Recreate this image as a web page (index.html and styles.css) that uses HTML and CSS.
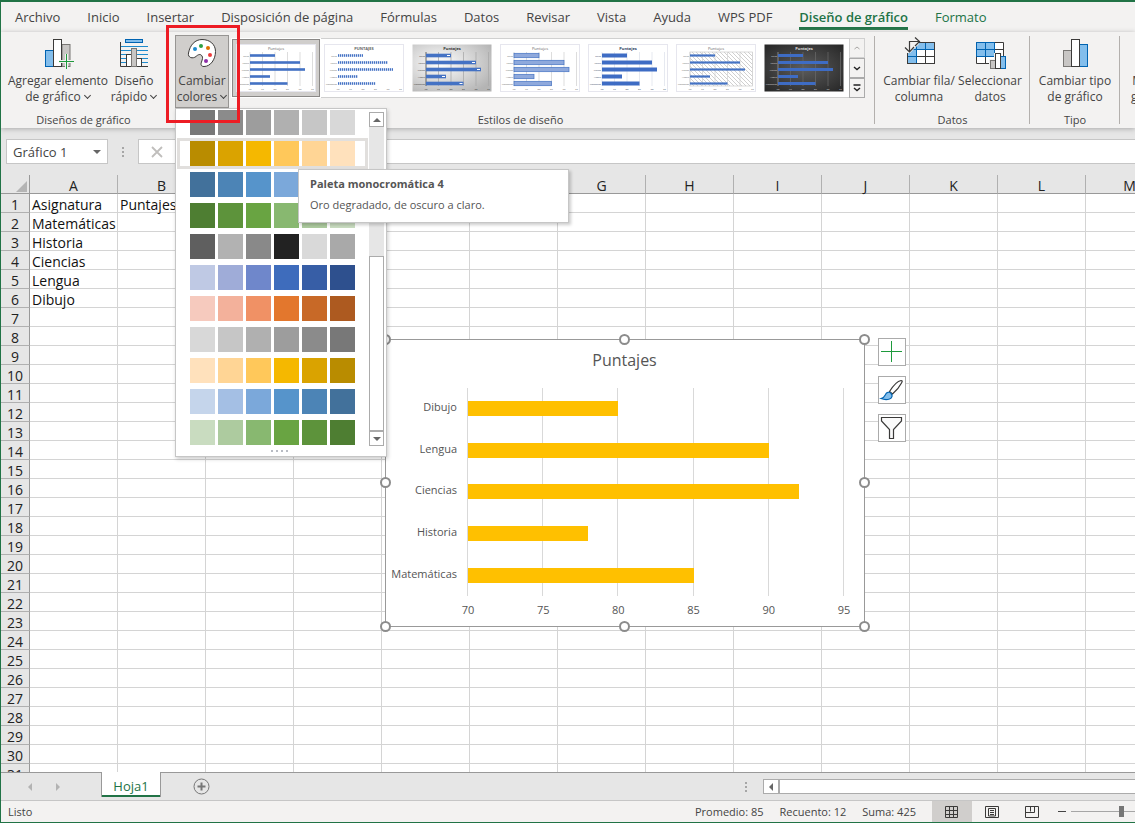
FILE: index.html
```html
<!DOCTYPE html>
<html lang="es">
<head>
<meta charset="utf-8">
<title>Gráfico 1</title>
<link rel="stylesheet" href="styles.css">
</head>
<body>
<div class="app">
  <nav class="tabs" aria-label="Cinta de opciones">
    <button class="tab">Archivo</button>
    <button class="tab">Inicio</button>
    <button class="tab">Insertar</button>
    <button class="tab">Disposición de página</button>
    <button class="tab">Fórmulas</button>
    <button class="tab">Datos</button>
    <button class="tab">Revisar</button>
    <button class="tab">Vista</button>
    <button class="tab">Ayuda</button>
    <button class="tab">WPS PDF</button>
    <button class="tab tab-active">Diseño de gráfico</button>
    <button class="tab tab-context">Formato</button>
  </nav>

  <div class="ribbon">
    <section class="group group-layouts">
      <div class="group-body">
        <button class="tool tool-add">
          <svg class="tool-icon" width="32" height="32" viewBox="0 0 32 32">
            <rect x="3.500" y="13.500" width="8" height="16" fill="#83beec" stroke="#0063b1"/>
            <rect x="20" y="7.500" width="8" height="22" fill="#c8c6c4" stroke="#797774"/>
            <rect x="11.500" y="2.500" width="8" height="27" fill="#fff" stroke="#3b3a39"/>
            <path d="M17 24.500H33M24.500 17V32" stroke="#f3f2f1" stroke-width="3"/>
            <path d="M17 24.500H32M24.500 17V32" stroke="#1e9a3c" stroke-width="1"/>
          </svg>
          <span>Agregar elemento<br>de gráfico <i class="chev"></i></span>
        </button>
        <button class="tool tool-quick">
          <svg class="tool-icon" width="32" height="32" viewBox="0 0 32 32">
            <rect x="7.500" y="2.500" width="17" height="3" fill="#83beec" stroke="#0063b1"/>
            <path d="M3 9.500H30M3 13.500H30M3 17.500H30M3 21.500H30M3 25.500H30" stroke="#1e8bcd"/>
            <path d="M2.500 5V29.500H30" fill="none" stroke="#3b3a39"/>
            <rect x="8.500" y="17.500" width="5" height="12" fill="#fff" stroke="#3b3a39"/>
            <rect x="18.500" y="21.500" width="5" height="8" fill="#fff" stroke="#3b3a39"/>
            <rect x="13.500" y="11.500" width="5" height="18" fill="#c8c6c4" stroke="#797774"/>
          </svg>
          <span>Diseño<br>rápido <i class="chev"></i></span>
        </button>
      </div>
      <h2 class="group-name">Diseños de gráfico</h2>
    </section>

    <section class="group group-styles">
      <div class="group-body">
        <div class="color-picker">
          <button class="tool tool-colors" aria-expanded="true">
            <svg class="tool-icon" width="32" height="32" viewBox="0 0 32 32">
              <path d="M2.500 16C4 8 9 2.500 16 2.500c8 0 13.500 5 13.500 12 0 8-5 15-11.500 15-3 0-3.500-2-2.500-4.500 1-3 1.500-4.500 .5-6-1.500-2.500-4-1.500-6 .5-3 2.500-8.500 1.500-7.500-3.500z" fill="#fff" stroke="#3b3a39"/>
              <circle cx="9" cy="12" r="2" fill="#1e8bcd"/><circle cx="15" cy="9" r="2" fill="#2ea043"/>
              <circle cx="22" cy="11" r="2" fill="#e07000"/><circle cx="24" cy="18" r="2" fill="#ed3b3b"/>
              <circle cx="20" cy="24" r="2" fill="#8e2fa8"/>
            </svg>
            <span>Cambiar<br>colores <i class="chev"></i></span>
          </button>
          <div class="menu">
            <div class="menu-main">
              <div class="palettes" id="palettes"></div>
              <div class="scroll">
                <button class="scroll-btn" aria-label="Subir"><i class="tri tri-up"></i></button>
                <div class="scroll-thumb"></div>
                <button class="scroll-btn" aria-label="Bajar"><i class="tri tri-down"></i></button>
              </div>
            </div>
            <div class="grip"><i></i><i></i><i></i><i></i></div>
            <div class="tooltip" role="tooltip">
              <strong>Paleta monocromática 4</strong>
              <span>Oro degradado, de oscuro a claro.</span>
            </div>
          </div>
          <div class="marker"></div>
        </div>
        <div class="gallery">
          <div class="thumbs" id="thumbs"></div>
          <div class="gallery-nav">
            <button aria-label="Fila anterior" disabled><svg width="8" height="8" viewBox="0 0 8 8"><path d="M1.500 5L4 3l2.500 2" fill="none" stroke="#a8a6a4"/></svg></button>
            <button aria-label="Fila siguiente"><svg width="8" height="8" viewBox="0 0 8 8"><path d="M1 3l3 2.500L7 3" fill="none" stroke="#222" stroke-width="1.400"/></svg></button>
            <button aria-label="Más estilos"><svg width="8" height="8" viewBox="0 0 8 8"><path d="M.5 1h7M1 4l3 2.500L7 4" fill="none" stroke="#222" stroke-width="1.400"/></svg></button>
          </div>
        </div>
      </div>
      <h2 class="group-name">Estilos de diseño</h2>
    </section>

    <section class="group group-data">
      <div class="group-body">
        <button class="tool tool-swap">
          <svg class="tool-icon" width="32" height="32" viewBox="0 0 32 32">
            <rect x="4.500" y="5.500" width="27" height="21" fill="#fff"/>
            <path d="M4.500 5.500h27v7h-18v14h-9z" fill="#83beec"/>
            <path d="M13.500 5.500v21M22.500 5.500v21M4.500 12.500h27M4.500 19.500h27" stroke="#3b3a39"/>
            <path d="M13.500 26V5.500M22.500 12V5.500M5 12.500h26M5 19.500h8" stroke="#0063b1"/>
            <rect x="4.500" y="5.500" width="27" height="21" fill="none" stroke="#3b3a39"/>
            <path d="M1 0h15v7l-9 9H1z" fill="#f3f2f1"/>
            <path d="M6.500 14V4.500H16M12 .5l4.500 4L12 9M2 10.500l4.500 4.500 4.500-5" fill="none" stroke="#3b3a39" stroke-width="1.200"/>
          </svg>
          <span>Cambiar fila/<br>columna</span>
        </button>
        <button class="tool tool-select">
          <svg class="tool-icon" width="32" height="32" viewBox="0 0 32 32">
            <rect x="2.500" y="5.500" width="27" height="21" fill="#fff"/>
            <path d="M2.500 5.500h18v14h-18z" fill="#83beec"/>
            <path d="M11.500 5.500v21M20.500 5.500v21M2.500 12.500h27M2.500 19.500h27M2.500 5.500h27v21h-27z" fill="none" stroke="#3b3a39"/>
            <path d="M11.500 5.500v14M2.500 12.500h18M2.500 5.500h18v14h-18z" fill="none" stroke="#0063b1"/>
            <path d="M15 22h5v-6h8v3h5v14H15z" fill="#f3f2f1"/>
            <rect x="16.500" y="23.500" width="5" height="8" fill="#c8c6c4" stroke="#797774"/>
            <rect x="26.500" y="19.500" width="5" height="12" fill="#83beec" stroke="#0063b1"/>
            <rect x="21.500" y="16.500" width="5" height="15" fill="#fff" stroke="#3b3a39"/>
          </svg>
          <span>Seleccionar<br>datos</span>
        </button>
      </div>
      <h2 class="group-name">Datos</h2>
    </section>

    <section class="group group-type">
      <div class="group-body">
        <button class="tool tool-type">
          <svg class="tool-icon" width="32" height="32" viewBox="0 0 32 32">
            <rect x="4.500" y="13.500" width="8" height="16" fill="#c8c6c4" stroke="#797774"/>
            <rect x="20.500" y="7.500" width="8" height="22" fill="#83beec" stroke="#0063b1"/>
            <rect x="12.500" y="2.500" width="8" height="27" fill="#fff" stroke="#3b3a39"/>
          </svg>
          <span>Cambiar tipo<br>de gráfico</span>
        </button>
      </div>
      <h2 class="group-name">Tipo</h2>
    </section>

    <section class="group group-place">
      <div class="group-body">
        <button class="tool tool-move"><span class="tool-icon"></span><span>Mover<br>gráfico</span></button>
      </div>
      <h2 class="group-name">Ubicación</h2>
    </section>
  </div>

  <div class="formula">
    <button class="name-box"><span>Gráfico 1</span><i class="tri tri-down"></i></button>
    <div class="dots"><i></i><i></i><i></i></div>
    <div class="formula-box">
      <svg width="12" height="12" viewBox="0 0 12 12"><path d="M1 1l10 10M11 1L1 11" stroke="#c0bebc" stroke-width="1.800"/></svg>
      <input class="formula-input" aria-label="Barra de fórmulas">
    </div>
  </div>

  <main class="sheet">
    <table class="grid">
      <thead><tr id="cols"><th class="corner"><i></i></th></tr></thead>
      <tbody id="rows"></tbody>
    </table>

    <figure class="chart">
      <figcaption class="chart-title">Puntajes</figcaption>
      <div class="chart-body">
        <div class="cats"><span>Dibujo</span><span>Lengua</span><span>Ciencias</span><span>Historia</span><span>Matemáticas</span></div>
        <div class="plot">
          <div class="lines"><i></i><i></i><i></i><i></i><i></i></div>
          <div class="bars">
            <div><b style="width:40%"></b></div>
            <div><b style="width:80%"></b></div>
            <div><b style="width:88%"></b></div>
            <div><b style="width:32%"></b></div>
            <div><b style="width:60%"></b></div>
          </div>
        </div>
      </div>
      <div class="axis"><span>70</span><span>75</span><span>80</span><span>85</span><span>90</span><span>95</span></div>
      <i class="handle h-nw"></i><i class="handle h-n"></i><i class="handle h-ne"></i>
      <i class="handle h-w"></i><i class="handle h-e"></i>
      <i class="handle h-sw"></i><i class="handle h-s"></i><i class="handle h-se"></i>
      <div class="chart-tools">
        <button aria-label="Elementos de gráfico"><svg width="26" height="26" viewBox="0 0 26 26"><path d="M2 12.500h21M12.500 2v21" stroke="#1e9a3c"/></svg></button>
        <button aria-label="Estilos de gráfico"><svg width="26" height="26" viewBox="0 0 26 26"><path d="M10.500 14.500C14 9 19 4 22 3.500c1.500 0 1.500 1 .5 2.500-2 4-5.500 8-9 11z" fill="#fff" stroke="#3b3a39" stroke-width="1.200"/><path d="M2 21.500c3-.5 3.500-2 4.500-4 1-2.500 4-3 5.500-1 2 2 1 4.500-1.500 5.500-3 1-6 .5-8.500-.5z" fill="#83beec" stroke="#0063b1" stroke-width="1.200"/></svg></button>
        <button aria-label="Filtros de gráfico"><svg width="26" height="26" viewBox="0 0 26 26"><path d="M2.500 2.500h20v3.500l-8 8.500v9h-4v-9l-8-8.500z" fill="#fafafa" stroke="#3b3a39" stroke-width="1.200"/></svg></button>
      </div>
    </figure>
  </main>

  <div class="sheetbar">
    <button class="nav-arrow" aria-label="Hoja anterior"><i class="tri tri-left"></i></button>
    <button class="nav-arrow" aria-label="Hoja siguiente"><i class="tri tri-right"></i></button>
    <button class="sheet-tab">Hoja1</button>
    <button class="add-sheet" aria-label="Hoja nueva"><svg width="17" height="17" viewBox="0 0 17 17"><circle cx="8.500" cy="8.500" r="7.500" fill="none" stroke="#777"/><path d="M4.500 8.500h8M8.500 4.500v8" stroke="#777" stroke-width="2"/></svg></button>
    <div class="hscroll">
      <div class="dots"><i></i><i></i><i></i></div>
      <button class="hscroll-btn" aria-label="Izquierda"><i class="tri tri-left"></i></button>
      <div class="hscroll-thumb"></div>
    </div>
  </div>

  <footer class="status">
    <span class="ready">Listo</span>
    <span class="stat">Promedio: 85</span>
    <span class="stat">Recuento: 12</span>
    <span class="stat">Suma: 425</span>
    <div class="views">
      <button class="view view-on" aria-label="Normal"><svg width="14" height="14" viewBox="0 0 14 14" fill="none" stroke="#3b3a39"><path d="M.5 1.500h12v11H.5zM4.500 1.500v11M8.500 1.500v11M.5 5.500h12M.5 9.500h12"/></svg></button>
      <button class="view" aria-label="Diseño de página"><svg width="14" height="14" viewBox="0 0 14 14" fill="none" stroke="#3b3a39"><path d="M.5 1.500h13v11H.5zM3.500 3.500h7v7.500h-7zM5 5.500h4M5 7.500h4M5 9.500h4"/></svg></button>
      <button class="view" aria-label="Vista de saltos"><svg width="14" height="14" viewBox="0 0 14 14" fill="none" stroke="#3b3a39"><path d="M.5 1.500h13v11H.5zM5.500 1.500v5M9.500 1.500v6M.5 7.500h9"/></svg></button>
    </div>
    <button class="zoom-out" aria-label="Alejar"></button>
    <input class="zoom" type="range" min="0" max="100" value="50" aria-label="Zoom">
  </footer>
</div>
<script src="script.js"></script>
</body>
</html>
```
FILE: styles.css
```css
* { box-sizing: border-box; }
body { margin: 0; font: 12px/16px "Open Sans", "Noto Sans", sans-serif; color: #444; }
button { font: inherit; color: inherit; background: none; border: 0; padding: 0; margin: 0; }
i { display: block; font-style: normal; }

.app { display: flex; flex-direction: column; height: 100vh; overflow: hidden; background: #e6e6e6; border: solid #217346; border-width: 2px 0 1px 1px; }

.tabs { display: flex; flex: none; gap: 27px; height: 30px; padding: 0 14px; background: #f3f2f1; font-size: 13px; }
.tab { flex: none; height: 28px; padding-top: 4px; border-bottom: 3px solid transparent; white-space: nowrap; }
.tab-active { color: #217346; font-weight: 600; border-color: #217346; }
.tab-context { color: #217346; }

.ribbon { display: flex; flex: none; height: 96px; background: #f3f2f1; box-shadow: 0 1px 5px #aaa; }
.group { position: relative; display: flex; flex-direction: column; flex: none; height: 96px; padding-top: 3px; }
.group::after { content: ""; position: absolute; right: 0; top: 4px; height: 88px; border-right: 1px solid #b3b0ad; }
.group-layouts::after, .group-place::after { display: none; }
.group-layouts { width: 165px; }
.group-styles { width: 709px; }
.group-data { width: 155px; }
.group-type { width: 90px; }
.group-place { width: 80px; }
.group-body { display: flex; flex: 1; }
.group-name { margin: 0 0 1px; font-size: 11px; line-height: 15px; font-weight: 400; text-align: center; }
.tool { display: flex; flex-direction: column; align-items: center; gap: 4px; height: 73px; padding-top: 2px; text-align: center; white-space: nowrap; }
.tool-icon { display: block; flex: none; height: 32px; }
.chev { display: inline-block; width: 5px; height: 5px; margin: 0 1px 3px 1px; border: solid #444; border-width: 0 1px 1px 0; transform: rotate(45deg); }
.tool-add { width: 100px; margin-left: 7px; }
.tool-quick { width: 52px; }
.tool-swap { width: 74px; margin-left: 7px; }
.tool-select { width: 68px; }
.tool-type { width: 90px; }
.tool-move { width: 60px; }

.color-picker { position: relative; z-index: 5; margin-left: 9px; }
.tool-colors { width: 54px; background: #d0cecc; border: 1px solid #979593; padding-top: 1px; }
.marker { position: absolute; left: -9px; top: -10px; width: 74px; height: 98px; border: 3px solid #ed1c24; z-index: 3; }
.menu { position: absolute; left: 0; top: 73px; width: 212px; background: #fff; border: 1px solid #c6c6c6; box-shadow: 1px 2px 4px #0003; }
.menu-main { display: flex; height: 339px; }
.palettes { flex: 1; padding-left: 1px; overflow: hidden; margin-right: 1px; }
.palette { display: flex; gap: 3px; width: 191px; height: 31px; padding: 0 10px; border: 3px solid transparent; background: none; }
.palette:first-child { margin-top: -2px; }
.palette-on { border-color: #e1dfdd; }
.palette i { width: 25px; height: 25px; }
.scroll { display: flex; flex-direction: column; width: 15px; margin: 3px 2px 2px 0; background: #e6e6e6; }
.scroll-btn { display: grid; place-items: center; height: 15px; background: #fff; border: 1px solid #ababab; }
.scroll-thumb { height: 175px; margin-top: auto; background: #fff; border: 1px solid #ababab; }
.grip { display: flex; justify-content: center; gap: 3px; height: 8px; padding: 2px 4px 0 0; }
.grip i { width: 2px; height: 2px; background: #b8bcc4; }
.tooltip { position: absolute; left: 122px; top: 60px; display: flex; flex-direction: column; gap: 5px; width: 271px; padding: 6px 11px 9px; background: #fff; border: 1px solid #c6c6c6; box-shadow: 2px 2px 3px #0003; font-size: 11px; color: #555; white-space: nowrap; }

.tri { width: 0; height: 0; border: 4px solid transparent; }
.tri-up { border-width: 0 4px 4px; border-bottom-color: #666; }
.tri-down { border-width: 4px 4px 0; border-top-color: #666; }
.tri-left { border-width: 4px 4px 4px 0; border-right-color: #666; }
.tri-right { border-width: 4px 0 4px 4px; border-left-color: #666; }

.gallery { display: flex; height: 60px; margin: 3px 0 0 2px; border: 1px solid #d0d0d0; background: #fff; }
.thumbs { display: flex; }
.thumb { display: grid; place-items: center; width: 88px; height: 58px; }
.thumb-on { background: #d0cecc; border: 1px solid #8a8886; outline: 1px solid #fff; }
.thumb svg { display: block; }
.gallery-nav { display: flex; flex-direction: column; width: 16px; margin: -1px -1px -1px 1px; }
.gallery-nav button { flex: 1; display: grid; place-items: center; border: 1px solid #ababab; background: #f3f2f1; }
.gallery-nav button:disabled { border-color: #d0d0d0; }

.formula { display: flex; flex: none; height: 47px; padding: 11px 0 11px 5px; }
.name-box { display: flex; align-items: center; justify-content: space-between; width: 102px; padding: 0 6px; background: #fff; border: 1px solid #c6c6c6; font-size: 13px; }
.dots { display: flex; flex-direction: column; justify-content: center; gap: 2px; }
.dots i { width: 2px; height: 2px; background: #a6a6a6; }
.formula .dots { width: 30px; align-items: center; }
.formula-box { display: flex; flex: 1; align-items: center; background: #fff; border: 1px solid #c6c6c6; border-right: 0; padding-left: 12px; }
.formula-input { flex: 1; border: 0; outline: 0; font: inherit; }

.sheet { position: relative; flex: 1; min-height: 0; overflow: hidden; background: #fff; }
.grid { width: 1261px; table-layout: fixed; border-collapse: separate; border-spacing: 0; color: #111; font-size: 14px; line-height: 14px; }
.grid th, .grid td { width: 88px; height: 19px; padding: 4px 0 0; border: solid #d4d4d4; border-width: 0 1px 1px 0; text-align: left; font-weight: 400; white-space: nowrap; overflow: visible; }
.grid td { padding-left: 2px; }
.grid th { background: #e6e6e6; border-color: #b0b0b0; text-align: center; color: #222; }
.grid thead th { border-bottom-color: #999; }
.grid tbody th, .grid .corner { width: 29px; border-right-color: #999; }
.corner i { margin: 0 2px 0 auto; width: 0; border: solid transparent; border-width: 0 0 11px 11px; border-bottom-color: #b4b4b4; }

.chart { position: absolute; left: 384px; top: 164px; width: 480px; height: 288px; margin: 0; padding: 10px 20px 0 7px; background: #fff; border: 1px solid #999; color: #555; font-size: 11px; }
.chart-title { font-size: 16px; line-height: 20px; text-align: center; padding-left: 12px; height: 38px; }
.chart-body { display: flex; gap: 10px; height: 208px; }
.cats { display: flex; flex-direction: column; width: 64px; text-align: right; }
.cats span { flex: 1; display: flex; align-items: center; justify-content: flex-end; padding-bottom: 3px; }
.plot { position: relative; flex: 1; }
.lines { display: flex; height: 100%; border-left: 1px solid #d9d9d9; }
.lines i { flex: 1; border-right: 1px solid #d9d9d9; }
.bars { position: absolute; inset: 0 0 0 1px; display: flex; flex-direction: column; }
.bars div { flex: 1; display: flex; align-items: center; }
.bars b { height: 15px; background: #ffc000; }
.axis { display: flex; justify-content: space-between; margin: 6px -10px 0 65px; }
.axis span { width: 20px; text-align: center; }
.handle { position: absolute; width: 11px; height: 11px; border: 2px solid #8c8c8c; border-radius: 50%; background: #fff; }
.h-nw, .h-n, .h-ne { top: -6px; }
.h-w, .h-e { top: calc(50% - 6px); }
.h-sw, .h-s, .h-se { bottom: -6px; }
.h-nw, .h-w, .h-sw { left: -6px; }
.h-n, .h-s { left: calc(50% - 6px); }
.h-ne, .h-e, .h-se { right: -6px; }
.chart-tools { position: absolute; left: 492px; top: -2px; display: flex; flex-direction: column; gap: 10px; }
.chart-tools button { width: 28px; height: 28px; background: #fff; border: 1px solid #ababab; }
.chart-tools svg { display: block; }

.sheetbar { display: flex; flex: none; align-items: flex-start; height: 28px; border-top: 1px solid #999; }
.nav-arrow { width: 28px; height: 27px; display: grid; place-items: center; opacity: .4; }
.nav-arrow:first-child { margin-left: 15px; }
.sheet-tab { width: 60px; height: 25px; margin: -1px 0 0 29px; padding-top: 2px; background: #fff; border: solid #999; border-width: 0 1px; box-shadow: inset 0 -2px #217346; color: #217346; font-size: 13px; }
.add-sheet { width: 17px; height: 27px; margin-left: 32px; display: grid; place-items: center; }
.hscroll { display: flex; width: 390px; height: 15px; margin: 6px 0 0 auto; }
.hscroll .dots { width: 18px; }
.hscroll-btn { width: 16px; display: grid; place-items: center; background: #fff; border: 1px solid #ababab; }
.hscroll-thumb { flex: 1; background: #fff; border: 1px solid #ababab; border-right: 0; }

.status { display: flex; flex: none; align-items: center; height: 22px; padding-left: 7px; overflow: hidden; background: #f3f2f1; border-top: 1px solid #c6c6c6; font-size: 11px; }
.ready { margin-right: auto; }
.stat { margin-right: 16px; white-space: nowrap; }
.views { display: flex; }
.view { display: grid; place-items: center; width: 40px; height: 21px; }
.view-on { background: #d0cecc; }
.zoom-out { width: 8px; height: 1px; margin: 0 5px 0 6px; background: #444; }
.zoom { appearance: none; flex: none; width: 101px; height: 11px; margin: 0 -37px 0 0; background: linear-gradient(#a6a6a6, #a6a6a6) center / 100% 1px no-repeat; }
.zoom::-webkit-slider-thumb { appearance: none; width: 5px; height: 11px; background: #767676; }
```
FILE: script.js
```js
const palettes = [
  ["#787878", "#8b8b8b", "#9d9d9d", "#b0b0b0", "#c6c6c6", "#d8d8d8"],
  ["#b98c00", "#daa300", "#f5b800", "#ffc85a", "#ffd595", "#ffe1bc"],
  ["#42719b", "#4c84b6", "#5694cb", "#7ba8da", "#a4bfe4", "#c5d5eb"],
  ["#4e7e32", "#5d933b", "#69a442", "#88b870", "#adcb9f", "#c9dcc0"],
  ["#5f5f5f", "#b2b2b2", "#898989", "#222222", "#d9d9d9", "#a9a9a9"],
  ["#bfc9e4", "#9facd8", "#6f87cb", "#3e6cbc", "#375ea6", "#2e508e"],
  ["#f6cabe", "#f3b19b", "#f09165", "#e3772d", "#c86927", "#ad5a20"],
  ["#d8d8d8", "#c6c6c6", "#b0b0b0", "#9d9d9d", "#8b8b8b", "#787878"],
  ["#ffe1bc", "#ffd595", "#ffc85a", "#f5b800", "#daa300", "#b98c00"],
  ["#c5d5eb", "#a4bfe4", "#7ba8da", "#5694cb", "#4c84b6", "#42719b"],
  ["#c9dcc0", "#adcb9f", "#88b870", "#69a442", "#5d933b", "#4e7e32"]
];
document.getElementById("palettes").innerHTML = palettes.map((p, i) =>
  `<button class="palette${i === 1 ? " palette-on" : ""}" aria-label="Paleta ${i + 1}">${p.map(c => `<i style="background:${c}"></i>`).join("")}</button>`
).join("");

// Gallery previews: the same five bars drawn in each chart style.
const values = [25, 50, 55, 20, 37.5];
const names = ["Dibujo", "Lengua", "Ciencias", "Historia", "Matemáticas"];
const styles = [
  { bg: "#fff", text: "#666", line: "#d4d4d4", bar: "#4472c4", h: 2.6 },
  { bg: "#fff", text: "#666", line: "none", bar: "url(#dash)", h: 2.6, title: "PUNTAJES", bold: 1 },
  { bg: "url(#silver)", text: "#333", line: "#aaa", bar: "#4472c4", h: 3.6, axis: "#444", bold: 1, tips: 1 },
  { bg: "#fff", text: "#666", line: "#d4d4d4", bar: "#8fa9dc", h: 4.4, edge: "#4472c4" },
  { bg: "#fff", text: "#2f3f5f", line: "#dfe3ec", bar: "#3e6cc4", h: 4, bold: 1 },
  { bg: "#fff", text: "#666", line: "#d4d4d4", bar: "#4472c4", h: 2.2, hatch: 1 },
  { bg: "url(#coal)", text: "#ddd", line: "#666", bar: "#3e6cc4", h: 3, bold: 1, axis: "#999" }
];
const defs = `<defs>
  <pattern id="dash" width="2" height="4" patternUnits="userSpaceOnUse"><path d="M0 0h1.300v4H0z" fill="#4472c4"/></pattern>
  <pattern id="hatch" width="4" height="4" patternUnits="userSpaceOnUse"><path d="M0 0l4 4" stroke="#bbb" stroke-width=".7"/></pattern>
  <radialGradient id="silver" cx=".35" cy=".4" r=".75"><stop stop-color="#fff"/><stop offset="1" stop-color="#b4b4b4"/></radialGradient>
  <radialGradient id="coal" r=".7"><stop stop-color="#5c5c5c"/><stop offset="1" stop-color="#262626"/></radialGradient>
</defs>`;
document.getElementById("thumbs").innerHTML = styles.map((s, i) => {
  const lines = [0, 1, 2, 3, 4, 5].map(k => `<path d="M${14 + k * 12.5} 8v34" stroke="${k === 0 && s.axis || s.line}" stroke-width=".8"/>`).join("");
  const bars = values.map((v, k) => {
    const y = 11.5 + k * 7;
    return `<rect x="14" y="${y - s.h / 2}" width="${v}" height="${s.h}" fill="${s.bar}" stroke="${s.edge || "none"}" stroke-width=".7"/>` +
      (s.tips ? `<rect x="${v + 10}" y="${y - .5}" width="3" height="1" fill="#fff"/>` : "") +
      `<text x="13" y="${y + 1}" font-size="1.900" text-anchor="end">${names[k]}</text>`;
  }).join("");
  const ticks = [70, 75, 80, 85, 90, 95].map((t, k) => `<text x="${14 + k * 12.5}" y="46" text-anchor="middle">${t}</text>`).join("");
  return `<button class="thumb${i ? "" : " thumb-on"}" aria-label="Estilo ${i + 1}"><svg width="80" height="48" viewBox="0 0 80 48" font-size="2.500" fill="${s.text}">${i ? "" : defs}
    <rect x=".5" y=".5" width="79" height="47" fill="${s.bg}" stroke="${s.axis ? "none" : "#e6e6ee"}"/>
    ${s.hatch ? '<rect x="14" y="8" width="62.500" height="34" fill="url(#hatch)" stroke="#ccc" stroke-width=".7"/>' : ""}
    ${lines}${bars}${ticks}<text x="40" y="5.500" font-size="4" font-weight="${s.bold ? 700 : 400}" text-anchor="middle">${s.title || "Puntajes"}</text></svg></button>`;
}).join("");

const letters = [..."ABCDEFGHIJKLM"];
const cells = { A: ["Asignatura", "Matemáticas", "Historia", "Ciencias", "Lengua", "Dibujo"], B: ["Puntajes"] };
document.querySelector(".grid").style.width = `${29 + letters.length * 88}px`;
document.getElementById("cols").insertAdjacentHTML("beforeend", letters.map(l => `<th>${l}</th>`).join(""));
document.getElementById("rows").innerHTML = Array.from({ length: 31 }, (_, r) =>
  `<tr><th>${r + 1}</th>${letters.map(l => `<td>${(cells[l] || [])[r] || ""}</td>`).join("")}</tr>`
).join("");
```
